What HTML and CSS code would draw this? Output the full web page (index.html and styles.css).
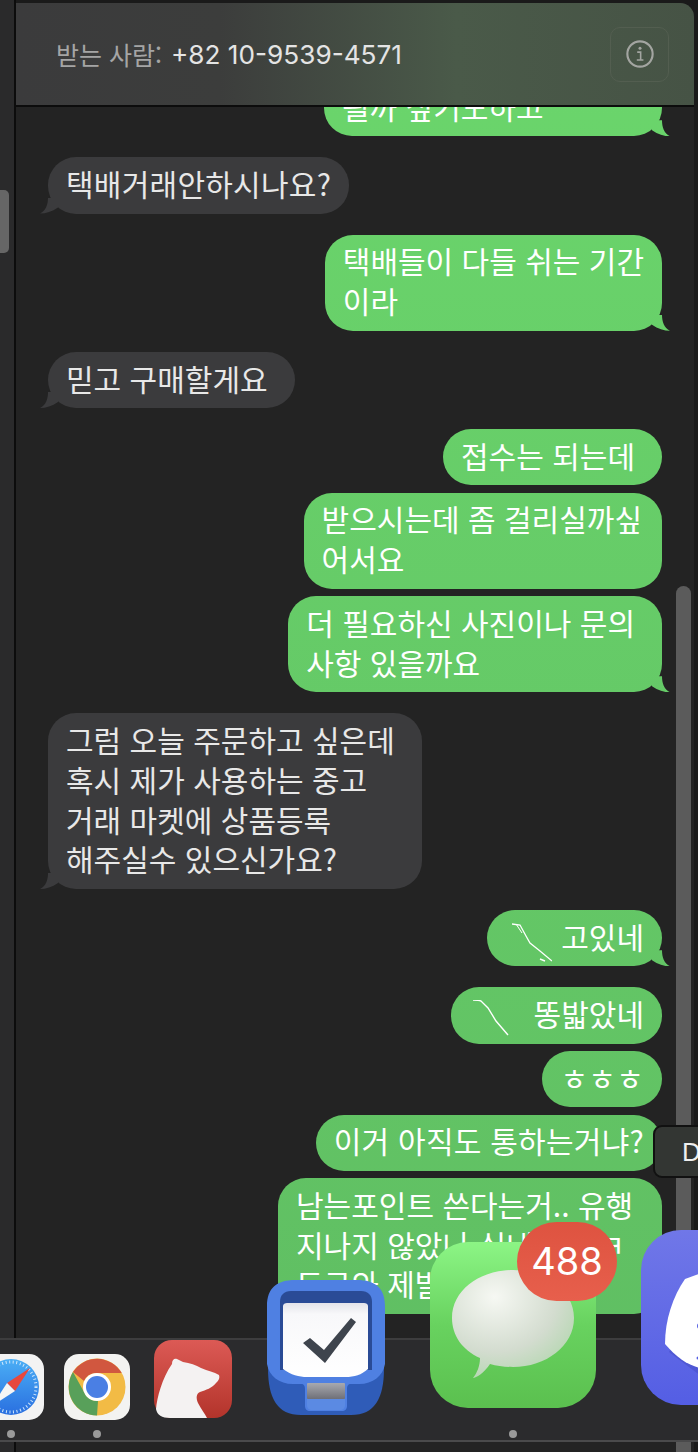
FILE: index.html
```html
<!DOCTYPE html>
<html lang="ko">
<head>
    <meta charset="UTF-8">
    <meta name="viewport" content="width=device-width, initial-scale=1.0">
    <title>메시지</title>
    <link rel="stylesheet" href="styles.css">
</head>
<body>
    <div class="app">
        <div class="side-strip">
            <div class="side-thumb"></div>
        </div>

        <div class="window">
            <!-- Conversation header -->
            <header class="header">
                <span class="to-label">받는 사람:</span>
                <span class="to-number">+82 10-9539-4571</span>
                <button class="info-button">
                    <svg class="info-icon" viewBox="0 0 28 28">
                        <circle cx="14" cy="14" r="11.8" fill="none" stroke="#a3a5a1" stroke-width="2"/>
                        <circle cx="14" cy="8.6" r="1.4" fill="#a3a5a1"/>
                        <path d="M11.4 12.2h3.2v7.4M11 19.6h6.2" fill="none" stroke="#a3a5a1" stroke-width="1.5"/>
                    </svg>
                </button>
            </header>

            <!-- Messages -->
            <div class="messages">
                <div class="bubble sent tail wide first">될까 싶기도하고</div>
                <div class="bubble received tail spaced stretch">택배거래안하시나요?</div>
                <div class="bubble sent tail spaced">택배들이 다들 쉬는 기간<br>이라</div>
                <div class="bubble received tail spaced roomy">믿고 구매할게요</div>
                <div class="bubble sent spaced roomy">접수는 되는데</div>
                <div class="bubble sent roomy-small">받으시는데 좀 걸리실까싶<br>어서요</div>
                <div class="bubble sent tail roomy">더 필요하신 사진이나 문의<br>사항 있을까요</div>
                <div class="bubble received tail spaced roomy">그럼 오늘 주문하고 싶은데<br>혹시 제가 사용하는 중고<br>거래 마켓에 상품등록<br>해주실수 있으신가요?</div>
                <div class="bubble sent tail spaced">
                    <svg class="scribble" viewBox="0 0 40 40">
                        <path d="M0 1l8 1 6 11 4 7 10 8 12 10" fill="none" stroke="#fff" stroke-width="1.3"/>
                        <path d="M4 1l6 9" fill="none" stroke="#fff" stroke-width="1"/>
                        <path d="M28 36l5 2" fill="none" stroke="#fff" stroke-width="1.5"/>
                    </svg>고있네
                </div>
                <div class="bubble sent spaced">
                    <svg class="scribble long" viewBox="0 0 42 40">
                        <path d="M0 0c4 0 6 0 8 1l7 7 8 13 12 14" fill="none" stroke="#fff" stroke-width="1.4"/>
                    </svg>똥밟았네
                </div>
                <div class="bubble sent stretch">ㅎㅎㅎ</div>
                <div class="bubble sent stretch">이거 아직도 통하는거냐?</div>
                <div class="bubble sent last">남는포인트 쓴다는거.. 유행<br>지나지 않았나 싶네요 ㅋㅋ<br>도구와 제발</div>
            </div>

            <div class="scrollbar">
                <div class="scrollbar-thumb"></div>
            </div>
        </div>

        <div class="tooltip">D</div>

        <div class="dock">
            <div class="dock-item safari running">
                <svg viewBox="0 0 66 66">
                    <defs>
                        <linearGradient id="safariBlue" x1="0" y1="0" x2="0" y2="1">
                            <stop offset="0" stop-color="#4aaef5"/>
                            <stop offset="1" stop-color="#2a6fe0"/>
                        </linearGradient>
                    </defs>
                    <rect width="66" height="66" rx="15" fill="#f3f3f3"/>
                    <circle cx="33" cy="33" r="28" fill="url(#safariBlue)"/>
                    <circle cx="33" cy="33" r="25" fill="none" stroke="#cfe6fb" stroke-width="3" stroke-dasharray="1 2.6"/>
                    <path d="M52 14L29 29l8 8z" fill="#e8483d"/>
                    <path d="M14 52l15-23 8 8z" fill="#f5f5f5"/>
                </svg>
            </div>
            <div class="dock-item chrome running">
                <svg viewBox="0 0 66 66">
                    <rect width="66" height="66" rx="15" fill="#f3f3f1"/>
                    <circle cx="33" cy="33" r="28.5" fill="#f2bb45"/>
                    <path d="M9 18A28.5 28.5 0 0 1 57.7 19H33A14 14 0 0 0 20 27z" fill="#d1573f"/>
                    <path d="M9 18L20 38A14 14 0 0 0 34 47L33 61.5A28.5 28.5 0 0 1 9 18z" fill="#58a05a"/>
                    <circle cx="33" cy="33" r="14" fill="#fff"/>
                    <circle cx="33" cy="33" r="11" fill="#4a7fe4"/>
                </svg>
            </div>
            <div class="dock-item bear">
                <svg viewBox="0 0 78 78">
                    <defs>
                        <linearGradient id="bearRed" x1="0" y1="0" x2="0" y2="1">
                            <stop offset="0" stop-color="#dc5a55"/>
                            <stop offset="1" stop-color="#b3342b"/>
                        </linearGradient>
                    </defs>
                    <rect width="78" height="78" rx="18" fill="url(#bearRed)"/>
                    <path d="M2 69C3 58 8 38 18 24C18 20 20 18 23 19C25 20 27 21 29 22C36 23 42 25 47 28C54 31 60 32 65 35C66 38 65 40 62 43C58 48 52 50 46 52C42 54 42 58 44 63C47 69 51 74 53 78H16C8 78 3 75 2 69z" fill="#f4f2f2"/>
                </svg>
            </div>
            <div class="dock-item tasks">
                <svg viewBox="0 0 118 138">
                    <defs>
                        <linearGradient id="paperShade" x1="0" y1="0" x2="0" y2="1">
                            <stop offset="0" stop-color="#e4e4ea"/>
                            <stop offset="0.15" stop-color="#f8f8fa"/>
                            <stop offset="1" stop-color="#fff"/>
                        </linearGradient>
                        <linearGradient id="slotGray" x1="0" y1="0" x2="0" y2="1">
                            <stop offset="0" stop-color="#a8a9b0"/>
                            <stop offset="1" stop-color="#6f7078"/>
                        </linearGradient>
                    </defs>
                    <path d="M1 30H117V88C117 118 108 135 84 135H34C10 135 1 118 1 88z" fill="#2f5cb8"/>
                    <path d="M0 26C0 8 10 0 28 0H90C108 0 118 8 118 26V84C116 96 106 104 92 104H84C81 104 80 106 80 109V126C80 129 78 131 75 131H43C40 131 38 129 38 126V109C38 106 37 104 34 104H26C12 104 2 96 0 84z" fill="#4f80e2"/>
                    <path d="M13 22C13 15 17 11 24 11H94C101 11 105 15 105 22V90H13z" fill="#2a4b96"/>
                    <path d="M16 26C16 24 18 23 20 23H97C99 23 101 24 101 26V89C94 95 88 97 78 97H40C32 97 24 95 16 89z" fill="url(#paperShade)"/>
                    <path d="M36 63L43 58L57 70L84 38L89 42L58 83z" fill="#3e444d"/>
                    <rect x="40" y="103" width="38" height="16" rx="1" fill="url(#slotGray)"/>
                    <path d="M40 119H78V125C78 128 76 130 73 130H45C42 130 40 128 40 125z" fill="#5b8ae3"/>
                </svg>
            </div>
            <div class="dock-item imessage running">
                <svg viewBox="0 0 166 166">
                    <defs>
                        <linearGradient id="msgGreen" x1="0" y1="0" x2="0" y2="1">
                            <stop offset="0" stop-color="#8cf585"/>
                            <stop offset="0.5" stop-color="#68d25f"/>
                            <stop offset="1" stop-color="#5bc04f"/>
                        </linearGradient>
                        <radialGradient id="msgBubble" cx="0.35" cy="0.25" r="0.85">
                            <stop offset="0" stop-color="#f6f8f3"/>
                            <stop offset="0.6" stop-color="#d3dccf"/>
                            <stop offset="0.85" stop-color="#bcd8b8"/>
                            <stop offset="1" stop-color="#a4e0a0"/>
                        </radialGradient>
                    </defs>
                    <rect width="166" height="166" rx="38" fill="url(#msgGreen)"/>
                    <path d="M83 28C116 28 144 48 144 76C144 104 116 125 83 125C75 125 67 124 60 122C54 131 46 136 43 136C47 131 50 124 50 116C32 108 22 93 22 76C22 48 50 28 83 28z" fill="url(#msgBubble)"/>
                </svg>
                <span class="badge">488</span>
            </div>
            <div class="dock-item discord">
                <svg viewBox="0 0 175 175">
                    <defs>
                        <linearGradient id="discordBlue" x1="0" y1="0" x2="0" y2="1">
                            <stop offset="0" stop-color="#7077e8"/>
                            <stop offset="1" stop-color="#545ee4"/>
                        </linearGradient>
                    </defs>
                    <rect width="175" height="175" rx="40" fill="url(#discordBlue)"/>
                    <path d="M28 122L60 146V60z" fill="#434cc4" opacity="0.5"/>
                    <path d="M44 49L60 43V138C48 136 36 128 24 114C24 90 32 66 44 49z" fill="#fff"/>
                    <circle cx="59" cy="96" r="3" fill="#545ee4"/>
                    <circle cx="57" cy="128" r="1.5" fill="#545ee4"/>
                </svg>
            </div>
        </div>
    </div>
</body>
</html>
```

FILE: styles.css
```css
* {
    box-sizing: border-box;
}

body {
    margin: 0;
    background-color: #1a1a1a;
    font-family: "Noto Sans CJK KR", "Liberation Sans", sans-serif;
    overflow: hidden;
}

.app {
    position: relative;
    display: flex;
    width: 698px;
    height: 1452px;
    overflow: hidden;
}

.side-strip {
    flex: 0 0 16px;
    padding-top: 190px;
    background-color: #2a2a2b;
    border-right: 2px solid #0c0c0c;
}

.side-thumb {
    width: 9px;
    height: 63px;
    background-color: #666;
    border-radius: 0 5px 5px 0;
}

.window {
    position: relative;
    flex: 0 0 678px;
    margin-top: 3px;
    background-color: #232323;
    border-top-right-radius: 14px;
    overflow: hidden;
}

.header {
    display: flex;
    align-items: center;
    height: 104px;
    padding: 0 25px 0 40px;
    background: linear-gradient(90deg, #3b3b3c 0%, #3c3d3c 30%, #4a5a49 65%, #465345 100%);
    border-bottom: 2px solid #0c0c0c;
}

.to-label {
    font-size: 25px;
    color: #a5a5a5;
    margin-right: 9px;
}

.to-number {
    font-family: Inter, "Liberation Sans", sans-serif;
    font-size: 26.2px;
    color: #e4e4e4;
}

.info-button {
    display: flex;
    align-items: center;
    justify-content: center;
    width: 59px;
    height: 55px;
    margin-left: auto;
    padding: 0;
    background: transparent;
    border: 1px solid #535e50;
    border-radius: 10px;
}

.info-icon {
    width: 30px;
    height: 30px;
}

.messages {
    display: flex;
    flex-direction: column;
    padding: 0 32px;
    height: 1343px;
    overflow: hidden;
}

.bubble {
    position: relative;
    flex: none;
    margin-top: 7.4px;
    padding: 6.7px 18px 9.7px;
    border-radius: 28px;
    font-size: 30px;
    line-height: 39.8px;
    white-space: nowrap;
    color: #fff;
}

.bubble.spaced {
    margin-top: 21.2px;
}

.bubble.first {
    margin-top: -27px;
}

.bubble.wide {
    width: 338px;
}

.bubble.roomy {
    padding-right: 27px;
}

.bubble.roomy-small {
    padding-right: 20px;
}

.bubble.stretch {
    letter-spacing: 0.25px;
}

.bubble.last {
    width: 384px;
}

.sent {
    align-self: flex-end;
    background: linear-gradient(#6bd66c, #5fbd62) fixed;
}

.received {
    align-self: flex-start;
    background-color: #3b3b3d;
    color: #e8e8e8;
}

.tail::after {
    content: "";
    position: absolute;
    bottom: 0;
    width: 18px;
    height: 16px;
    background: inherit;
}

.sent.tail::after {
    right: -8px;
    clip-path: path("M0 0H10C10 7 12 13 18 16C12 16 6 14 0 10z");
}

.received.tail::after {
    left: -8px;
    clip-path: path("M18 0H8C8 7 6 13 0 16C6 16 12 14 18 10z");
}

.scribble {
    width: 40px;
    height: 40px;
    margin: -4px 9px -8px 7px;
    vertical-align: middle;
}

.scribble.long {
    width: 42px;
    margin: -4px 19px -8px 4px;
}

.scrollbar {
    position: absolute;
    top: 583px;
    right: 3px;
    bottom: 0;
    width: 15px;
}

.scrollbar-thumb {
    height: 100%;
    background-color: #5b5b5b;
    border-radius: 8px 8px 0 0;
}

.tooltip {
    position: absolute;
    top: 1125px;
    left: 653px;
    width: 70px;
    height: 53px;
    padding-left: 27px;
    background-color: #333633;
    border: 2px solid #111;
    border-radius: 9px;
    font-family: "Liberation Sans", sans-serif;
    font-size: 26px;
    line-height: 50px;
    color: #eee;
}

.dock {
    position: absolute;
    top: 1338px;
    left: 0;
    display: flex;
    align-items: flex-end;
    width: 698px;
    height: 104px;
    background-color: #2b2b2d;
    border-top: 2px solid #3d3d3e;
    border-bottom: 2px solid #4a4a4b;
}

.dock-item {
    position: relative;
    flex: none;
}

.dock-item svg {
    display: block;
    width: 100%;
    height: 100%;
}

.dock-item.running::after {
    content: "";
    position: absolute;
    left: 50%;
    width: 8px;
    height: 8px;
    margin-left: -4px;
    background-color: #9a9a9a;
    border-radius: 50%;
}

.safari {
    width: 66px;
    height: 66px;
    margin: 0 0 20px -22px;
}

.chrome {
    width: 66px;
    height: 66px;
    margin: 0 0 20px 20px;
}

.safari::after,
.chrome::after {
    bottom: -18px;
}

.bear {
    width: 78px;
    height: 78px;
    margin: 0 0 22px 24px;
}

.tasks {
    width: 118px;
    height: 138px;
    margin: 0 0 22px 35px;
}

.imessage {
    width: 166px;
    height: 166px;
    margin: 0 0 32px 45px;
}

.imessage::after {
    bottom: -30px;
}

.badge {
    position: absolute;
    top: -20px;
    left: 87px;
    width: 100px;
    height: 79px;
    background: linear-gradient(#de5340, #e75f4c);
    border-radius: 40px;
    font-family: Inter, "Liberation Sans", sans-serif;
    font-size: 38px;
    line-height: 79px;
    text-align: center;
    color: #fff;
}

.discord {
    width: 175px;
    height: 175px;
    margin: 0 0 35px 45px;
}
```
